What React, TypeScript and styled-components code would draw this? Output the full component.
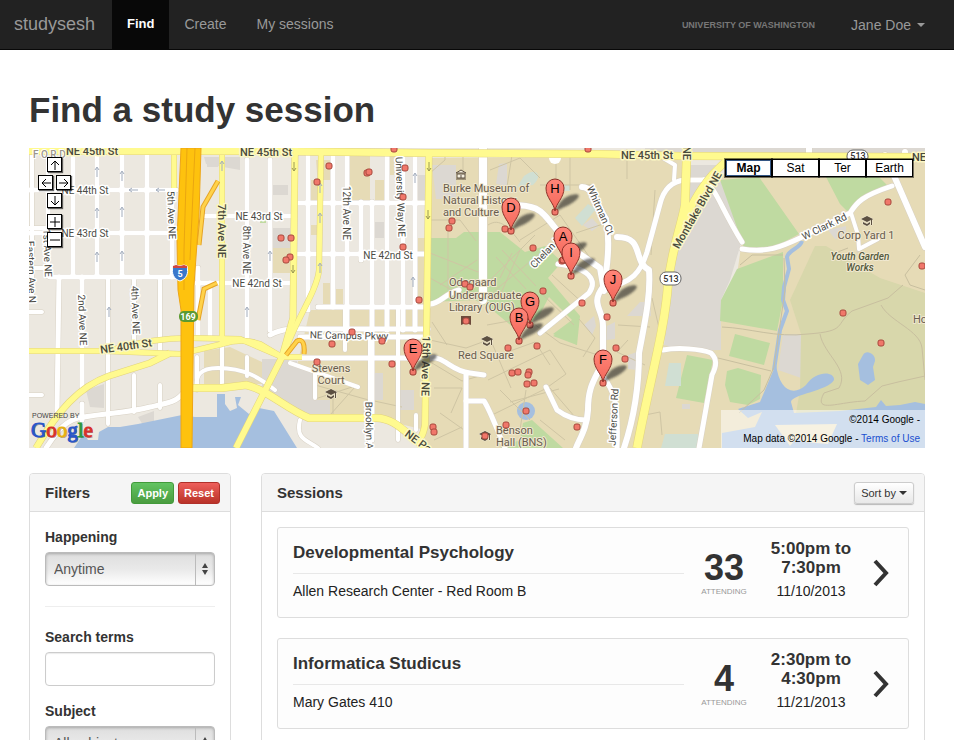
import React from "react";
import styled, { createGlobalStyle } from "styled-components";

const GlobalStyle = createGlobalStyle`
  *, *::before, *::after { box-sizing: border-box; }
  html { scrollbar-width: none; }
  body {
    margin: 0;
    background: #fff;
    color: #333;
    font: 14px/20px "Liberation Sans", Arial, sans-serif;
  }
`;

/* ---------- Navigation ---------- */

const Navbar = styled.nav`
  display: flex;
  height: 50px;
  background: #222;
  border-bottom: 1px solid #080808;
`;

const Brand = styled.a`
  padding: 14px 17px 0 14px;
  color: #999;
  font-size: 18px;
  text-decoration: none;
`;

const NavLink = styled.a<{ $active?: boolean }>`
  padding: 14px 15px 0;
  color: ${(p) => (p.$active ? "#fff" : "#999")};
  background: ${(p) => (p.$active ? "#080808" : "transparent")};
  font-size: ${(p) => (p.$active ? 13 : 14)}px;
  font-weight: ${(p) => (p.$active ? 700 : 400)};
  text-decoration: none;
`;

const NavEnd = styled.div`
  display: flex;
  align-items: center;
  gap: 36px;
  margin-left: auto;
  padding: 0 29px 0 0;
`;

const Campus = styled.span`
  color: #777;
  font-size: 9px;
  font-weight: 700;
  text-transform: uppercase;
`;

const UserMenu = styled.button`
  display: flex;
  align-items: center;
  gap: 6px;
  padding: 0;
  border: 0;
  background: none;
  color: #999;
  font: inherit;
`;

const Caret = styled.span`
  border: 4px solid transparent;
  border-top-color: currentColor;
  border-bottom-width: 0;
`;

/* ---------- Page ---------- */

const Page = styled.main`
  padding: 40px 29px 0;
`;

const PageTitle = styled.h1`
  margin: 0 0 18px;
  font-size: 35px;
  line-height: 40px;
  font-weight: 700;
`;

const Columns = styled.div`
  display: grid;
  grid-template-columns: 202px 1fr;
  align-items: start;
  gap: 30px;
  margin-top: 25px;
`;

const Panel = styled.section`
  border: 1px solid #ddd;
  border-radius: 4px;
`;

const PanelHeader = styled.header`
  display: flex;
  align-items: center;
  gap: 4px;
  height: 38px;
  padding: 0 10px 0 15px;
  background: #f5f5f5;
  border-bottom: 1px solid #ddd;
  border-radius: 3px 3px 0 0;
`;

const PanelTitle = styled.h2`
  margin: 0 auto 0 0;
  font-size: 15px;
  font-weight: 700;
`;

const PanelBody = styled.div`
  padding: 15px;
`;

const tones = {
  green: { bg: "linear-gradient(#62c462, #4a9c3f)", border: "#429a3a", fg: "#fff" },
  red: { bg: "linear-gradient(#ee5f5b, #b93228)", border: "#b0302a", fg: "#fff" },
  plain: { bg: "linear-gradient(#fff, #e8e8e8)", border: "#ccc", fg: "#333" },
};

const SmallButton = styled.button<{ $tone: keyof typeof tones }>`
  display: flex;
  align-items: center;
  gap: 3px;
  height: 22px;
  padding: 0 ${(p) => (p.$tone === "plain" ? 6 : 5)}px;
  border: 1px solid ${(p) => tones[p.$tone].border};
  border-radius: 3px;
  background: ${(p) => tones[p.$tone].bg};
  color: ${(p) => tones[p.$tone].fg};
  font: ${(p) => (p.$tone === "plain" ? 400 : 700)} 11px "Liberation Sans", Arial, sans-serif;
  box-shadow: ${(p) => (p.$tone === "plain" ? "0 1px 1px rgba(0,0,0,.25)" : "none")};
`;

const Label = styled.label`
  display: block;
  margin-bottom: 5px;
  font-weight: 700;
`;

const SelectFrame = styled.div`
  display: grid;
  grid-template-columns: 1fr 19px;
  height: 34px;
  margin-bottom: 15px;
  border: 1px solid #bbb;
  border-radius: 4px;
  background: linear-gradient(#dedede, #e9e9e9 50%, #fff);
  box-shadow: inset 0 1px 3px rgba(0, 0, 0, 0.25);
`;

const Select = styled.select`
  grid-area: 1 / 1 / 2 / 3;
  appearance: none;
  padding: 0 8px;
  border: 0;
  background: transparent;
  color: #555;
  font: inherit;
`;

const Stepper = styled.span`
  grid-area: 1 / 2;
  display: grid;
  place-items: center;
  border-left: 1px solid #bbb;
  pointer-events: none;
`;

const TextInput = styled.input`
  display: block;
  width: 100%;
  height: 34px;
  margin-bottom: 15px;
  padding: 0 8px;
  border: 1px solid #ccc;
  border-radius: 4px;
  box-shadow: inset 0 1px 1px rgba(0, 0, 0, 0.08);
  font: inherit;
`;

const Rule = styled.hr`
  margin: 20px 0;
  border: 0;
  border-top: 1px solid #eee;
`;

/* ---------- Session cards ---------- */

const Card = styled.article`
  display: grid;
  grid-template-columns: 1fr 80px 94px 46px;
  min-height: 91px;
  margin-bottom: 20px;
  padding: 0 4px 0 15px;
  border: 1px solid #ddd;
  border-radius: 3px;
  background: #fdfdfd;
`;

const Subject = styled.h3`
  margin: 0 0 7px;
  padding: 14px 0 9px;
  border-bottom: 1px solid #e8e8e8;
  font-size: 17px;
  line-height: 22px;
  font-weight: 700;
`;

const Plain = styled.p`
  margin: 0;
  color: #222;
`;

const Attendance = styled.div`
  padding-top: 20px;
  text-align: center;
`;

const Count = styled.div`
  font-size: 36px;
  line-height: 40px;
  font-weight: 700;
`;

const Caption = styled.div`
  color: #999;
  font-size: 8px;
  line-height: 8px;
  text-transform: uppercase;
`;

const When = styled.div`
  padding-top: 11px;
  text-align: center;
`;

const Hours = styled.div`
  margin-bottom: 4px;
  font-size: 17px;
  line-height: 19px;
  font-weight: 700;
`;

const OpenLink = styled.a`
  display: grid;
  place-items: center;
  color: #333;
`;

/* ---------- Map ---------- */

const MapFrame = styled.div`
  position: relative;
  height: 300px;
  overflow: hidden;
  background: #ece8e0;
`;

const MapDrawing = styled.svg`
  display: block;
  width: 100%;
  height: 100%;
  font-family: Roboto, sans-serif;
`;

const PanPad = styled.div`
  position: absolute;
  top: 9px;
  left: 9px;
  display: grid;
  grid-template-columns: repeat(4, 9px);
  grid-template-rows: 18px 18px 21px 18px 18px;
`;

const PanButton = styled.button<{ $row: number; $col: number }>`
  grid-row: ${(p) => p.$row};
  grid-column: ${(p) => p.$col} / span 2;
  display: grid;
  place-items: center;
  width: 15px;
  height: 15px;
  padding: 0;
  border: 1px solid #000;
  background: #fff;
  box-shadow: 1px 1px 1px rgba(0, 0, 0, 0.6);
`;

const TypeBar = styled.div`
  position: absolute;
  top: 11px;
  right: 12px;
  display: flex;
`;

const TypeButton = styled.button<{ $on?: boolean }>`
  width: 47px;
  height: 18px;
  padding: 0;
  border: 1px solid #000;
  outline: ${(p) => (p.$on ? "1px solid #345684" : "none")};
  outline-offset: -2px;
  background: #fff;
  box-shadow: 0 0 0 1px rgba(0, 0, 0, 0.5);
  color: #000;
  font: ${(p) => (p.$on ? 700 : 400)} 12px "Liberation Sans", Arial, sans-serif;
`;

const Attribution = styled.div`
  position: absolute;
  right: 0;
  bottom: 0;
  width: 204px;
  padding: 0 5px 0 0;
  background: rgba(255, 255, 255, 0.5);
  color: #000;
  font-size: 10px;
  line-height: 19px;
  text-align: right;
  white-space: nowrap;
`;

const TermsLink = styled.a`
  color: #1a4fd0;
  text-decoration: none;
`;

const WHITE_ROADS: [string, number][] = [
  ["M32 148V300", 4], ["M48 160V276", 5], ["M73 155V276", 5], ["M97 155V276", 5],
  ["M122 155V276", 5], ["M147 155V276", 5], ["M172 190V277", 5], ["M29 228H48M29 268H48", 4],
  ["M29 190H176M29 233H178M50 277H178", 5],
  ["M59 277L57 410", 5], ["M82 277V387M82 404V420", 5], ["M108 277V424", 4], ["M134 277V352M134 375V412", 4],
  ["M160 277V350M160 385V408", 4], ["M29 312H42M29 395H42", 4],
  ["M46 448C58 430 66 419 84 417C105 413 128 413 150 407C168 403 177 402 184 392", 5],
  ["M198 268V338M210 283V338M247 160V340M270 160V330", 5],
  ["M197 283H290M206 216H292", 5], ["M197 390C195 375 200 368 218 368C245 368 260 378 275 390", 4],
  ["M222 345V384M197 357V384M247 357V376", 4],
  ["M308 155V310M333 155V307M347 155V330M372 202V440M387 155V330M403 155V330M415 155V330", 5],
  ["M361 202V260", 5],
  ["M296 203H428M296 254H428M318 307H428", 5],
  ["M270 335C285 327 300 329 316 329H428M300 337H428M290 358H430", 5],
  ["M290 363L358 387M315 368V398M300 420C295 440 308 440 318 448", 4],
  ["M370 330V448M398 307V440M345 307V350M416 415V430", 4],
  ["M430 358C445 356 450 371 470 373L484 375M466 373V448M430 304C440 304 444 294 459 290", 5],
  ["M483 148V300", 8], ["M466 401H484C490 410 495 425 505 448", 5],
  ["M505 205C538 204 540 209 556 229L570 247L600 268L604 291", 6],
  ["M582 187C594 187 598 208 606 219C610 239 609 260 603 290", 6],
  ["M603 287C590 304 603 309 603 326V361C596 379 588 384 588 410C587 428 580 438 576 448", 6],
  ["M603 288C633 284 641 271 647 252L660 204C664 188 673 181 685 180H706", 5],
  ["M617 237C645 237 632 261 649 270C651 296 644 326 639 353C639 388 633 421 624 448", 6],
  ["M674 180L675 165L663 158", 4], ["M603 376C613 390 619 400 617 448", 5],
  ["M546 387L557 410C569 419 578 420 586 420M558 264C589 268 598 280 589 293L540 333", 5],
  ["M704 180C717 190 720 206 742 242", 5],
  ["M742 249C767 253 781 247 800 238L850 213C857 202 862 196 892 186", 5],
  ["M851 213L858 235L859 249L878 239", 4],
  ["M885 155L925 247M809 148V155M905 152V161", 6],
  ["M663 350C678 347 701 349 711 353C717 359 717 365 712 375L699 448", 5],
];

const YELLOW_ROADS: [string, number][] = [
  ["M29 151H245L430 153L600 154L680 156L925 157", 7],
  ["M29 351H105L180 354L222 344C238 339 249 340 260 344L282 357H302", 5],
  ["M108 351C143 341 165 338 190 338L240 339L282 357", 5],
  ["M36 448C58 411 78 387 109 376L150 363L170 353", 6],
  ["M192 388H222L246 385C268 390 285 408 309 418H376C397 418 408 437 427 448", 7],
  ["M295 148L293 318L282 357L236 448", 6],
  ["M321 155L319 270C317 292 294 322 284 355", 5],
  ["M222 155V344", 5], ["M174 155V188", 5],
  ["M429 152L427 300L425 425C423 436 420 440 415 443", 6],
  ["M687 148L685 205C681 228 672 247 668 284C665 330 648 388 637 448", 8],
  ["M680 232C688 210 699 190 712 175L730 157", 7],
];

const PATHWAYS =
  "M430 173L445 160V155M463 155V180M430 220H460L476 241M430 253L478 272L484 268M440 285L477 260M448 232V290M430 278L470 300" +
  "M488 225C500 217 509 228 520 242M496 257L526 289M502 250L536 286M512 253L500 278M520 250L498 300M535 235L485 285M549 246L493 292" +
  "M490 170L520 158L540 178M512 155L506 193M556 160V182M540 185L595 185M520 240L560 215M560 215L595 265M576 233L603 224M540 292L574 325M552 275L585 305" +
  "M487 325L526 318L560 343L598 355M489 336L511 388M499 355L535 342L550 365M488 380L550 350L566 374L545 389L490 416M500 390L530 420M510 402L559 389M526 390L520 430M550 388L575 417M540 420L565 440" +
  "M583 357L595 338L579 319M618 325L650 327M628 340L617 352L645 365M645 415L660 412L662 435M652 298L660 332M570 155V190M627 149V179M655 190L651 255" +
  "M432 322L447 345M430 340L466 348L488 340M432 363L462 381L483 375M434 388H462L451 413M440 413L464 430M434 440L462 427" +
  "M315 385L365 399L402 407M315 399L352 387M330 415L355 387M333 390V418";

const BLOCK_BUILDINGS =
  "M86 390L104 384V408L90 407ZM138 417L154 411V424L143 425ZM270 185H288V195H270ZM270 228H290V248H270ZM207 158H218V167H207Z" +
  "M375 222H386V238H375ZM416 175H427V200H416ZM432 165H456V199H436ZM499 164L507 163V186L496 184ZM583 225L592 218L599 226L592 231Z" +
  "M373 373H383V400H373ZM400 390H414V410H400ZM607 326L615 322V339L606 340ZM584 325L594 316L596 326L592 335ZM628 355L637 352V370L628 369Z" +
  "M828 230L846 226V236L835 239ZM682 404H690V409H682ZM640 302H650L651 316H627Z";

const POOLS =
  "M524 176C536 166 544 175 533 185L517 187ZM575 218L588 204L596 209L582 226ZM564 185H570V191H564ZM669 363H681V386H665ZM665 434H698V448H661Z";

const DOTS: [number, number][] = [
  [329, 166], [367, 173], [369, 172], [317, 182], [394, 149], [405, 168], [403, 197], [281, 238], [291, 238],
  [290, 257], [286, 260], [403, 247], [419, 300], [452, 221], [449, 228], [465, 284], [470, 287], [466, 321],
  [332, 344], [352, 332], [382, 341], [392, 364], [317, 362], [433, 427], [434, 432], [588, 149], [533, 248],
  [543, 291], [562, 261], [505, 229], [582, 303], [607, 317], [616, 348], [625, 359], [508, 348], [537, 346],
  [512, 373], [518, 372], [529, 372], [528, 375], [527, 384], [534, 383], [526, 411], [506, 425], [485, 436],
  [577, 427], [888, 202], [922, 266], [843, 313], [881, 343],
];

const PINS: [string, number, number][] = [
  ["H", 555, 212], ["D", 511, 231], ["A", 563, 260], ["I", 571, 276], ["J", 613, 303],
  ["G", 530, 325], ["B", 519, 341], ["E", 413, 372], ["F", 603, 383],
];

type MapLabelData = { t: string; x: number; y: number; r?: number; kind?: "major" | "poi" | "park"; end?: boolean };

const LABELS: MapLabelData[] = [
  { t: "NE 45th St", x: 92, y: 151, kind: "major" },
  { t: "NE 45th St", x: 266, y: 152, kind: "major" },
  { t: "NE 45th St", x: 647, y: 155, kind: "major" },
  { t: "NE", x: 687, y: 153, r: 90, kind: "major" },
  { t: "NE", x: 919, y: 157, kind: "major" },
  { t: "NE 44th St", x: 85, y: 190 },
  { t: "NE 43rd St", x: 85, y: 233 },
  { t: "NE 43rd St", x: 259, y: 216 },
  { t: "NE 42nd St", x: 257, y: 283 },
  { t: "NE 42nd St", x: 388, y: 255 },
  { t: "NE Campus Pkwy", x: 349, y: 335, r: 1 },
  { t: "NE 40th St", x: 126, y: 346, r: -8, kind: "major" },
  { t: "5th Ave NE", x: 172, y: 215, r: 88 },
  { t: "7th Ave NE", x: 222, y: 231, r: 90, kind: "major" },
  { t: "8th Ave NE", x: 247, y: 250, r: 90 },
  { t: "12th Ave NE", x: 347, y: 213, r: 90 },
  { t: "University Way NE", x: 401, y: 197, r: 88 },
  { t: "1st Ave NE", x: 48, y: 253, r: 88 },
  { t: "Eastern Ave N", x: 32, y: 272, r: 88 },
  { t: "2nd Ave NE", x: 83, y: 320, r: 88 },
  { t: "4th Ave NE", x: 136, y: 310, r: 88 },
  { t: "15th Ave NE", x: 426, y: 366, r: 91, kind: "major" },
  { t: "Brooklyn Ave NE", x: 370, y: 438, r: 89 },
  { t: "NE Pacific St", x: 432, y: 451, r: 36, kind: "major" },
  { t: "Chelan Ln", x: 547, y: 250, r: -46 },
  { t: "Whitman Ct", x: 601, y: 210, r: 66 },
  { t: "Montlake Blvd NE", x: 697, y: 210, r: -60, kind: "major" },
  { t: "Jefferson Rd", x: 613, y: 417, r: -87 },
  { t: "W Clark Rd", x: 824, y: 226, r: -26 },
  { t: "Burke Museum of", x: 443, y: 188, kind: "poi", end: true },
  { t: "Natural History", x: 443, y: 200, kind: "poi", end: true },
  { t: "and Culture", x: 443, y: 212, kind: "poi", end: true },
  { t: "Odegaard", x: 449, y: 282, kind: "poi", end: true },
  { t: "Undergraduate", x: 449, y: 295, kind: "poi", end: true },
  { t: "Library (OUG)", x: 449, y: 307, kind: "poi", end: true },
  { t: "Red Square", x: 486, y: 355, kind: "poi" },
  { t: "Stevens", x: 331, y: 368, kind: "poi" },
  { t: "Court", x: 331, y: 380, kind: "poi" },
  { t: "Benson", x: 496, y: 430, kind: "poi", end: true },
  { t: "Hall (BNS)", x: 496, y: 442, kind: "poi", end: true },
  { t: "Corp Yard 1", x: 866, y: 235, kind: "poi" },
  { t: "Horticulture", x: 913, y: 319, kind: "poi", end: true },
  { t: "Youth Garden", x: 860, y: 256, kind: "park" },
  { t: "Works", x: 860, y: 267, kind: "park" },
];

const LABEL_STYLES = {
  street: { size: 10, weight: 400, fill: "#4b4b45" },
  major: { size: 11, weight: 500, fill: "#4a4a3c" },
  poi: { size: 11, weight: 400, fill: "#6a5d4e" },
  park: { size: 10, weight: 500, fill: "#555a40" },
};

function MapLabel({ t, x, y, r = 0, kind, end }: MapLabelData) {
  const s = LABEL_STYLES[kind ?? "street"];
  return (
    <text
      transform={`translate(${x} ${y}) rotate(${r})`}
      y={4}
      textAnchor={end ? "start" : "middle"}
      fontSize={s.size}
      fontWeight={s.weight}
      fontStyle={kind === "park" ? "italic" : "normal"}
      fill={s.fill}
      stroke={kind === "major" ? "#fbf7c4" : kind ? "#f0e8d0" : "#fff"}
      strokeWidth={kind === "poi" || kind === "park" ? 2 : 3}
      strokeLinejoin="round"
      paintOrder="stroke"
    >
      {t}
    </text>
  );
}

function Cap({ x, y }: { x: number; y: number }) {
  return (
    <g transform={`translate(${x} ${y})`} fill="#5c5042" stroke="#f3ecd8" strokeWidth="1" paintOrder="stroke">
      <path d="M-6 -2L0 -5L6 -2L5 -1V4H4V-1L0 1ZM-4 1L0 3L3 1V3L0 5L-4 3Z" />
    </g>
  );
}

function Pin({ letter, x, y }: { letter: string; x: number; y: number }) {
  return (
    <g transform={`translate(${x} ${y})`}>
      <path d="M0 0C3 -8 7 -14 16 -17C23 -19 26 -17 22 -13C17 -7 7 -5 0 0Z" fill="#222" opacity=".6" filter="url(#pinBlur)" />
      <rect x="-3" y="-3" width="6" height="6" rx="2" fill="#f0776a" stroke="#98382e" />
      <path d="M0 -1C-1 -9 -9 -14 -9 -24A9 9 0 0 1 9 -24C9 -14 1 -9 0 -1Z" fill="url(#pinFill)" stroke="#8c3028" />
      <text y="-19" textAnchor="middle" fontFamily="Liberation Sans, Arial, sans-serif" fontSize="13" fill="#000">
        {letter}
      </text>
    </g>
  );
}

function Arrows() {
  const up = [[97, 172], [97, 213], [97, 257], [122, 176], [122, 212], [122, 256], [222, 166], [270, 256], [320, 188], [320, 218], [320, 268], [415, 178], [413, 282], [109, 312], [247, 312]];
  return (
    <>
      {up.map(([x, y]) => (
        <path key={`${x}-${y}`} d={`M${x} ${y + 5}V${y - 4}M${x - 2} ${y - 2}L${x} ${y - 5}L${x + 2} ${y - 2}`} stroke="#a3adbd" fill="none" />
      ))}
      <path d="M138 190H129L132 188M129 190L132 192M165 190H156L159 188M156 190L159 192" stroke="#a3adbd" fill="none" />
      <path d="M294 162V171L292 168M294 171L296 168M429 162V171L427 168M429 171L431 168M428 210V219L426 216M428 219L430 216M293 265V273L291 270M293 273L295 270" stroke="#9c9a55" fill="none" />
    </>
  );
}

function CampusMap() {
  return (
    <MapDrawing viewBox="29 148 896 300" preserveAspectRatio="xMidYMid slice" role="img" aria-label="Map of study sessions">
      <defs>
        <linearGradient id="pinFill" x1="0" y1="0" x2="0" y2="1">
          <stop offset="0" stopColor="#ff8578" />
          <stop offset="1" stopColor="#f4685b" />
        </linearGradient>
        <filter id="pinBlur" x="-30%" y="-30%" width="160%" height="160%">
          <feGaussianBlur stdDeviation="1" />
        </filter>
      </defs>
      <rect x="29" y="148" width="896" height="300" fill="#ece8e0" />

      <g fill="#e6dbb6">
        <path d="M430 158H690L670 260L636 448H425V430L375 418H312L296 366H430Z" />
        <path d="M350 155H370V200H361L350 205ZM316 160H331V180H310V200H319ZM388 155H400V175H388ZM375 180H386V201H375ZM273 247H290V273H273ZM310 225H317V235H310ZM323 283H332V305H323ZM335 289H343V305H335ZM416 238H427V305H416ZM310 310H430V370H296ZM204 351L230 347L262 362V384H204Z" />
        <path d="M740 158H925V448H634L660 345H718L721 320L738 268L742 240L718 180Z" />
      </g>
      <g fill="#dcd8d2">
        <path d="M686 165H718L742 240L730 280L721 300V350L690 351L664 345L672 260Z" />
        <path d="M262 359H296L300 369L315 370V400H330V416H308L280 398L262 388ZM204 157H240V170L206 164ZM645 148H925V154H645ZM783 334H801V378L778 370Z" />
        <path d={BLOCK_BUILDINGS} />
      </g>
      <path d="M815 246H826L880 278L925 293V448H790L800 390L801 334L790 300Z" fill="#d8d7ab" />

      <g fill="#bfdaa1">
        <path d="M430 238H456L464 232H500L525 252L545 246L562 262L548 278L580 316L577 345L553 334L572 320L549 297L540 314L520 333L490 308L475 300L430 302Z" />
        <path d="M523 423L532 420L563 448H500L520 440ZM553 336L573 324L577 345Z" />
        <path d="M720 180L759 177L799 234L773 248H744L740 236ZM826 177H879L889 187L862 198L849 213L840 204ZM737 269L783 252V300L777 331L720 321L721 300ZM735 334L770 343L764 365L729 356ZM727 371L738 368L761 375L760 399L748 405L730 402L725 385ZM687 355L713 360L704 403L676 398ZM260 220H266V223H260Z" />
      </g>
      <path d={POOLS} fill="#d0dfd3" />

      <g fill="#a5bfdf">
        <path d="M74 448L84 433L88 440H98L99 432L108 427H120L138 424L182 415L195 417H217V394H225V404L230 411L237 408L235 397H241L238 405L249 414L259 408L274 411L297 448Z" />
        <path d="M776 364C779 390 793 397 806 385C816 370 835 371 834 380C828 391 792 394 791 402L794 413L840 411L876 407L881 400L886 406L900 405L915 402L925 404V448H722V433L755 427L762 412L748 418L738 409L760 402Z" />
        <path d="M863 355C866 349 876 354 875 361L873 367L875 380L868 385L860 380L858 364Z" />
        <circle cx="526" cy="411" r="9" />
      </g>
      <path d="M775 425L837 424L828 444L804 442L797 438L790 446Z" fill="#eee4c4" />
      <path d="M802 241C800 249 789 249 787 257L789 269L784 287L783 300L787 311L780 330L777 350L774 370" fill="none" stroke="#a5bfdf" strokeWidth="4" />

      <path d={PATHWAYS} fill="none" stroke="#cfc5a4" strokeWidth="1" />
      <path
        d="M722 327C750 328 775 338 808 334C848 331 834 325 852 311L888 298L903 285M881 305C890 322 920 330 922 348L925 380M820 334C824 355 850 369 839 388L824 393C813 414 837 402 865 401L882 386L898 382L925 376M718 358L771 371M784 258L785 290L774 367L764 390L739 413M740 265L752 255H783M848 248L835 253L840 260L853 257M920 255L905 275L910 285L925 290"
        fill="none"
        stroke="#c8bf9f"
      />

      <g fill="none" stroke="#d8d1c4" strokeLinecap="round">
        {WHITE_ROADS.map(([d, w]) => <path key={d} d={d} strokeWidth={w + 1} />)}
      </g>
      <g fill="none" stroke="#fff" strokeLinecap="round" strokeLinejoin="round">
        {WHITE_ROADS.map(([d, w]) => <path key={d} d={d} strokeWidth={w} />)}
      </g>
      <circle cx="555" cy="158" r="6" fill="#fff" />
      <g fill="none" stroke="#e2d37c">
        {YELLOW_ROADS.map(([d, w]) => <path key={d} d={d} strokeWidth={w + 1} />)}
      </g>
      <g fill="none" stroke="#fffa8f">
        {YELLOW_ROADS.map(([d, w]) => <path key={d} d={d} strokeWidth={w} />)}
      </g>

      <path d="M199 245L203 207L218 181M198 320L204 289L217 283M286 355L297 341C303 338 305 345 304 354" fill="none" stroke="#e5a325" strokeWidth="5" />
      <path d="M199 245L203 207L218 181M198 320L204 289L217 283M286 355L297 341C303 338 305 345 304 354" fill="none" stroke="#ffd24a" strokeWidth="3" />
      <path d="M181 148H201L199 215L194 285L192 448H181V310L178 290L177 240Z" fill="#fec20e" stroke="#eda515" />
      <path d="M187 148L184 250V290M195 148L190 260" stroke="#eaa611" fill="none" />
      <Arrows />

      <text x="33" y="158" fontSize="10" fontWeight="500" fill="#9c968c" stroke="#fff" strokeWidth="2" paintOrder="stroke">F O R D</text>
      {LABELS.map((l) => <MapLabel key={`${l.t}${l.x}${l.y}`} {...l} />)}

      <g stroke="#5c5042" fill="#f6f0df">
        <path d="M456 173L461 170L466 173ZM457 174H465V178H457ZM456 179H466" />
        <path d="M461 175V178" />
      </g>
      <path d="M461 316H471V325L466 323L461 325Z" fill="#6d4b3c" />
      <Cap x={487} y={341} />
      <Cap x={331} y={394} />
      <Cap x={485} y={436} />
      <Cap x={867} y={221} />

      <path d="M173 266L176 265L180 266L184 265L187 266C189 274 186 279 180 281C174 279 171 274 173 266Z" fill="#3a78cc" stroke="#fff" />
      <path d="M173 266L176 265L180 266L184 265L187 266V268H173Z" fill="#d0453f" />
      <text x="180" y="277" textAnchor="middle" fontSize="9" fontWeight="700" fill="#fff">5</text>
      <rect x="179" y="311" width="19" height="11" rx="5" fill="#5c9a31" />
      <text x="188" y="320" textAnchor="middle" fontSize="9" fontWeight="700" fill="#fff">169</text>
      <rect x="660" y="272" width="21" height="13" rx="6" fill="#fff" stroke="#666" />
      <text x="671" y="282" textAnchor="middle" fontSize="9" fontWeight="500" fill="#333">513</text>
      <rect x="847" y="150" width="21" height="13" rx="6" fill="#fff" stroke="#666" />
      <text x="858" y="159" textAnchor="middle" fontSize="9" fontWeight="500" fill="#333">513</text>

      {DOTS.map(([x, y]) => (
        <rect key={`${x}-${y}`} x={x - 3} y={y - 3} width="6" height="6" rx="2" fill="#f0776a" stroke="#a8483c" />
      ))}
      {PINS.map(([letter, x, y]) => <Pin key={letter} letter={letter} x={x} y={y} />)}

      <text x="32" y="418" fontSize="7" fill="#444" fontFamily="Liberation Sans, Arial, sans-serif">POWERED BY</text>
      <g fontFamily="Liberation Serif, Times New Roman, serif" fontSize="21" strokeWidth="1">
        {[["#1c2c50", 1], ["", 0]].map(([shade, d]) => (
          <text key={String(d)} x={31 + Number(d)} y={437 + Number(d)} fill={String(shade) || undefined} opacity={d ? 0.45 : 1} aria-hidden={d ? true : undefined}>
            {["#2a56c8", "#d8302a", "#e8b010", "#2a56c8", "#2c9a3c", "#d8302a"].map((c, i) => (
              <tspan key={i} fill={d ? String(shade) : c} stroke={d ? "none" : c}>{"Google"[i]}</tspan>
            ))}
          </text>
        ))}
      </g>
    </MapDrawing>
  );
}

const PAN_CONTROLS = [
  { label: "Pan up", row: 1, col: 2, d: "M6 11V2M2 6L6 2L10 6" },
  { label: "Pan left", row: 2, col: 1, d: "M11 6H2M6 2L2 6L6 10" },
  { label: "Pan right", row: 2, col: 3, d: "M1 6H10M6 2L10 6L6 10" },
  { label: "Pan down", row: 3, col: 2, d: "M6 1V10M2 6L6 10L10 6" },
  { label: "Zoom in", row: 4, col: 2, d: "M6 1V11M1 6H11" },
  { label: "Zoom out", row: 5, col: 2, d: "M1 6H11" },
];

function DropDown({ id, label, options }: { id: string; label: string; options: string[] }) {
  return (
    <>
      <Label htmlFor={id}>{label}</Label>
      <SelectFrame>
        <Select id={id}>
          {options.map((o) => <option key={o}>{o}</option>)}
        </Select>
        <Stepper>
          <svg width="8" height="14" viewBox="0 0 8 14" fill="#444" aria-hidden="true">
            <path d="M1 6L4 1L7 6ZM1 8L4 13L7 8Z" />
          </svg>
        </Stepper>
      </SelectFrame>
    </>
  );
}

const SESSIONS = [
  { subject: "Developmental Psychology", place: "Allen Research Center - Red Room B", count: 33, from: "5:00pm to", until: "7:30pm", date: "11/10/2013" },
  { subject: "Informatica Studicus", place: "Mary Gates 410", count: 4, from: "2:30pm to", until: "4:30pm", date: "11/21/2013" },
];

export default function App() {
  return (
    <>
      <GlobalStyle />
      <Navbar>
        <Brand href="#">studysesh</Brand>
        <NavLink href="#find" $active>Find</NavLink>
        <NavLink href="#create">Create</NavLink>
        <NavLink href="#mine">My sessions</NavLink>
        <NavEnd>
          <Campus>University of Washington</Campus>
          <UserMenu type="button">Jane Doe <Caret /></UserMenu>
        </NavEnd>
      </Navbar>
      <Page>
        <PageTitle>Find a study session</PageTitle>
        <MapFrame>
          <CampusMap />
          <PanPad>
            {PAN_CONTROLS.map((c) => (
              <PanButton key={c.label} type="button" aria-label={c.label} $row={c.row} $col={c.col}>
                <svg width="12" height="12" viewBox="0 0 12 12" fill="none" stroke="#000" aria-hidden="true">
                  <path d={c.d} />
                </svg>
              </PanButton>
            ))}
          </PanPad>
          <TypeBar>
            <TypeButton type="button" $on>Map</TypeButton>
            <TypeButton type="button">Sat</TypeButton>
            <TypeButton type="button">Ter</TypeButton>
            <TypeButton type="button">Earth</TypeButton>
          </TypeBar>
          <Attribution>
            <div>©2014 Google -</div>
            <div>Map data ©2014 Google - <TermsLink href="#terms">Terms of Use</TermsLink></div>
          </Attribution>
        </MapFrame>
        <Columns>
          <Panel>
            <PanelHeader>
              <PanelTitle>Filters</PanelTitle>
              <SmallButton type="button" $tone="green">Apply</SmallButton>
              <SmallButton type="button" $tone="red">Reset</SmallButton>
            </PanelHeader>
            <PanelBody>
              <DropDown id="happening" label="Happening" options={["Anytime", "Today", "This week"]} />
              <Rule />
              <Label htmlFor="terms">Search terms</Label>
              <TextInput id="terms" type="text" />
              <DropDown id="subject" label="Subject" options={["All subjects"]} />
            </PanelBody>
          </Panel>
          <Panel>
            <PanelHeader>
              <PanelTitle>Sessions</PanelTitle>
              <SmallButton type="button" $tone="plain">Sort by <Caret /></SmallButton>
            </PanelHeader>
            <PanelBody>
              {SESSIONS.map((s) => (
                <Card key={s.subject}>
                  <div>
                    <Subject>{s.subject}</Subject>
                    <Plain>{s.place}</Plain>
                  </div>
                  <Attendance>
                    <Count>{s.count}</Count>
                    <Caption>Attending</Caption>
                  </Attendance>
                  <When>
                    <Hours>{s.from}<br />{s.until}</Hours>
                    <Plain>{s.date}</Plain>
                  </When>
                  <OpenLink href="#session" aria-label={`Open ${s.subject}`}>
                    <svg width="16" height="28" viewBox="0 0 16 28" fill="none" stroke="currentColor" strokeWidth="4" aria-hidden="true">
                      <path d="M2 2L13 14L2 26" />
                    </svg>
                  </OpenLink>
                </Card>
              ))}
            </PanelBody>
          </Panel>
        </Columns>
      </Page>
    </>
  );
}
